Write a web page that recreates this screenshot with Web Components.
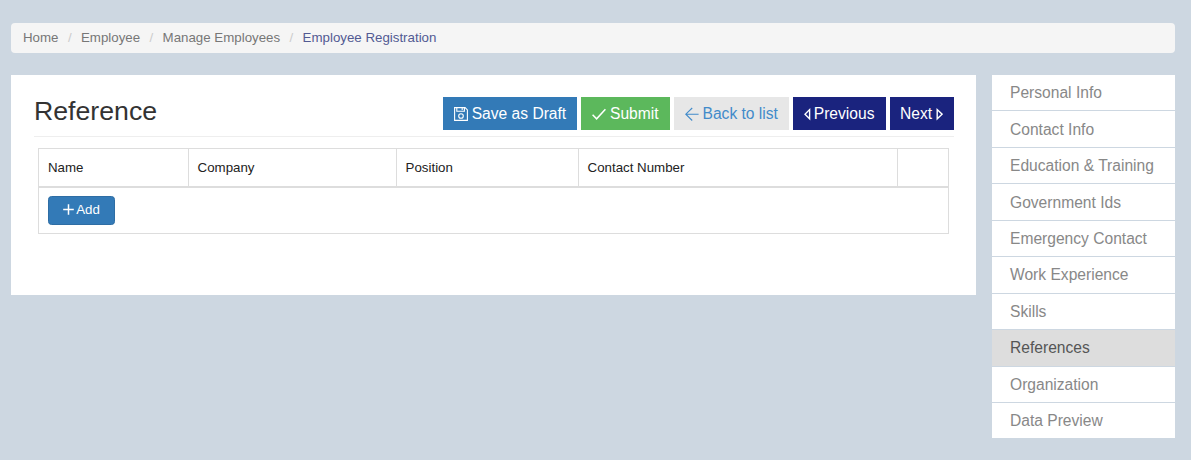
<!DOCTYPE html>
<html lang="en">
<head>
<meta charset="utf-8">
<title>Employee Registration</title>
<style>
html,body{margin:0;height:100%;background:#cdd7e1}
body{font:13.3px/18px "Liberation Sans",Arial,sans-serif;color:#333;overflow:hidden}
</style>
</head>
<body>
<registration-page></registration-page>
<script>
const define = (name, html, setup) => customElements.define(name, class extends HTMLElement {
  constructor() {
    super();
    this.attachShadow({mode: 'open'}).innerHTML = html;
  }
  connectedCallback() { if (setup) setup(this, this.shadowRoot); }
});

const icons = {
  save: '<path d="M.6 .6h10.5l2.3 2.3v10.5H.6z"/><path d="M2.8 .8v3.4h7.6V.8M8.2 1v2"/><circle cx="7" cy="9" r="2.3"/>',
  check: '<path stroke-width="1.5" d="M.6 7.8l4 4L13.4 2.2"/>',
  back: '<path d="M7.2 1L.8 7.2l6.4 6.3M.8 7.2h12.8"/>',
  prev: '<path stroke-width="1.4" d="M5.6 2.6v9.2L1 7.2z"/>',
  next: '<path stroke-width="1.4" d="M1.2 2.6v9.2l4.9-4.6z"/>',
  plus: '<path stroke-width="1.5" d="M5.5 1.2v10.6M.2 6.5h10.6"/>'
};

define('ui-icon', `<style>:host{display:inline-flex;flex:none}svg{display:block;fill:none;stroke:currentColor;stroke-width:1.1}</style><svg></svg>`, (el, root) => {
  const w = +el.getAttribute('width') || 14, svg = root.querySelector('svg');
  svg.setAttribute('width', w);
  svg.setAttribute('height', 14);
  svg.setAttribute('viewBox', `0 0 ${w} 14`);
  svg.innerHTML = icons[el.getAttribute('name')];
});

define('action-button', `<style>
:host{display:flex;align-items:center;justify-content:center;box-sizing:border-box;width:var(--w);height:33px;gap:var(--gap,4px);font-size:15.6px;line-height:23px;color:#fff;background:#337ab7;white-space:nowrap}
:host([kind=submit]){background:#5cb85c}
:host([kind=plain]){background:#e7e7e7;color:#428bca}
:host([kind=navy]){background:#1a237e}
:host([kind=small]){height:29px;font-size:13.3px;line-height:18px;border:1px solid #2e6da4;border-radius:3.5px;padding-bottom:1px}
</style><slot></slot>`);

define('bread-crumb', `<style>:host{display:inline}:host([current]){color:#525a93}
:host(:not([current]))::after{content:"/";color:#ccc;padding:0 9.4px}</style><slot></slot>`);

define('crumb-bar', `<style>:host{display:flex;align-items:center;box-sizing:border-box;height:30px;padding:0 12px;border-radius:4px;background:#f5f5f5;color:#777}</style><slot></slot>`);

define('side-item', `<style>
:host{display:flex;align-items:center;box-sizing:border-box;height:36.45px;padding:1px 0 0 18px;border-bottom:1.5px solid #cdd7e1;background:#fff;color:#888;font-size:15.6px;white-space:nowrap}
:host([active]){background:#ddd;color:#555}
</style><slot></slot>`);

define('side-menu', `<style>:host{display:block;width:183px}</style><slot></slot>`);

define('reference-table', `<style>
:host{display:block;box-sizing:border-box;width:911px;margin:11px 0 0 4px;border:1px solid #ddd;color:#222}
.head{display:grid;grid-template-columns:150px 208px 182px 319px 1fr;height:37px;border-bottom:2px solid #ddd}
.head span{display:flex;align-items:center;padding-left:9px;border-right:1px solid #ddd;box-sizing:border-box}
.head span+span{padding-left:8.6px}
.head span:last-child{border:0}
.foot{height:45px;padding:8px 9px;box-sizing:border-box}
</style>
<div class="head"><span>Name</span><span>Company</span><span>Position</span><span>Contact Number</span><span></span></div>
<div class="foot"><slot></slot></div>`);

define('content-panel', `<style>
:host{display:block;box-sizing:border-box;width:965px;height:220px;padding:22px 22.5px 0 23px;background:#fff}
header{display:flex;box-sizing:border-box;height:40px;border-bottom:1px solid #eee}
h1{flex:1;margin:0;font-size:26.7px;font-weight:400;line-height:29px}
.actions{display:flex;gap:3.9px}
</style>
<header><h1>Reference</h1><div class="actions"><slot name="actions"></slot></div></header>
<slot></slot>`);

define('registration-page', `<style>
:host{display:block;box-sizing:border-box;padding:23px 16px 0 11px}
main{display:flex;justify-content:space-between;align-items:flex-start;margin-top:22px}
</style>
<crumb-bar><bread-crumb>Home</bread-crumb><bread-crumb>Employee</bread-crumb><bread-crumb>Manage Employees</bread-crumb><bread-crumb current>Employee Registration</bread-crumb></crumb-bar>
<main>
<content-panel>
<action-button slot="actions" style="--w:134px"><ui-icon name="save"></ui-icon><span>Save as Draft</span></action-button>
<action-button slot="actions" kind="submit" style="--w:89px"><ui-icon name="check"></ui-icon><span>Submit</span></action-button>
<action-button slot="actions" kind="plain" style="--w:115px"><ui-icon name="back"></ui-icon><span>Back to list</span></action-button>
<action-button slot="actions" kind="navy" style="--w:93px;--gap:3px"><ui-icon name="prev" width="7"></ui-icon><span>Previous</span></action-button>
<action-button slot="actions" kind="navy" style="--w:64px"><span>Next</span><ui-icon name="next" width="7"></ui-icon></action-button>
<reference-table><action-button kind="small" style="--w:67px;--gap:2px"><ui-icon name="plus" width="11"></ui-icon><span>Add</span></action-button></reference-table>
</content-panel>
<side-menu>
<side-item>Personal Info</side-item><side-item>Contact Info</side-item><side-item>Education &amp; Training</side-item><side-item>Government Ids</side-item><side-item>Emergency Contact</side-item><side-item>Work Experience</side-item><side-item>Skills</side-item><side-item active>References</side-item><side-item>Organization</side-item><side-item>Data Preview</side-item>
</side-menu>
</main>`);
</script>
</body>
</html>
